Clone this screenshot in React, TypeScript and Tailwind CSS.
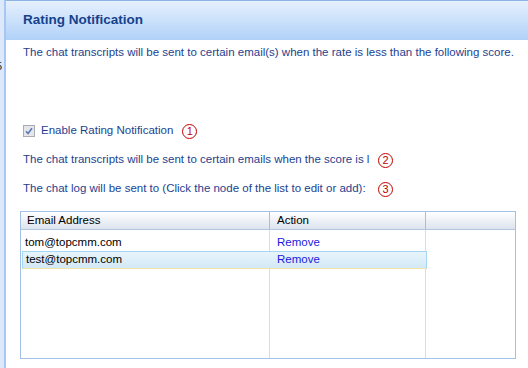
import React from "react";

function Num({ n }: { n: string }) {
  return (
    <span className="inline-flex shrink-0 items-center justify-center w-[15px] h-[15px] rounded-full border border-[#c00000] text-[#c00000] text-[11px] leading-none font-['Liberation_Sans',sans-serif]">
      {n}
    </span>
  );
}

export default function App() {
  const font = "font-['Liberation_Sans',Arial,sans-serif]";
  return (
    <div className={`w-[528px] h-[368px] flex bg-white overflow-hidden ${font}`}>
      <div className="w-[4px] shrink-0 bg-[#dde9fb] relative overflow-hidden">
        <span className="absolute left-[-4px] top-[58px] text-[11px] text-[#222]">5</span>
      </div>
      <div className="w-[2px] shrink-0 bg-[#a6c6f3]" />
      <div className="flex-1 flex flex-col">
        <div className="h-[40px] shrink-0 border-t border-[#8db2e3] bg-gradient-to-b from-[#e6f0fd] to-[#b0d1f8] pl-[17px] flex items-center">
          <span className="text-[13.5px] font-bold text-[#15428b]">Rating Notification</span>
        </div>
        <div className="h-[26px] shrink-0 pl-[17px] flex items-center text-[11.5px] text-[#1d3f8f] whitespace-nowrap">
          The chat transcripts will be sent to certain email(s) when the rate is less than the following score.
        </div>
        <div className="h-[55px] shrink-0" />
        <div className="h-[20px] shrink-0 pl-[17px] flex items-center text-[11.5px] text-[#1d3f8f]">
          <svg width="12" height="12" viewBox="0 0 12 12" className="mr-[6px] shrink-0">
            <rect x="0.5" y="0.5" width="11" height="11" fill="#e4e6ea" stroke="#a7acb6" />
            <path d="M3 6.2 L5 8.5 L9 3.2" fill="none" stroke="#5b7ab3" strokeWidth="1.6" />
          </svg>
          <span>Enable Rating Notification</span>
          <span className="ml-[9px] flex">
            <Num n="1" />
          </span>
        </div>
        <div className="h-[9px] shrink-0" />
        <div className="h-[20px] shrink-0 pl-[17px] flex items-center text-[11.5px] text-[#1d3f8f]">
          <span className="w-[355px] shrink-0 whitespace-nowrap">The chat transcripts will be sent to certain emails when the score is l</span>
          <Num n="2" />
        </div>
        <div className="h-[9px] shrink-0" />
        <div className="h-[20px] shrink-0 pl-[17px] flex items-center text-[11.5px] text-[#1d3f8f]">
          <span className="w-[355px] shrink-0 whitespace-nowrap">The chat log will be sent to (Click the node of the list to edit or add):</span>
          <Num n="3" />
        </div>
        <div className="h-[12px] shrink-0" />
        <div className="ml-[14px] w-[496px] h-[148px] shrink-0 border border-[#a3c0e6] flex flex-col text-[11.5px] text-black overflow-hidden">
          <div className="h-[18px] shrink-0 flex bg-gradient-to-b from-[#ffffff] to-[#dde3ee] border-b border-[#b3c6de]">
            <div className="w-[249px] border-r border-[#a9bfd8] pl-[6px] flex items-center">Email Address</div>
            <div className="w-[156px] border-r border-[#a9bfd8] pl-[7px] flex items-center">Action</div>
            <div className="flex-1" />
          </div>
          <div className="flex-1 min-h-0 relative flex">
            <div className="w-[249px] border-r border-[#dcdcdc]" />
            <div className="w-[156px] border-r border-[#dcdcdc]" />
            <div className="absolute left-0 top-0 right-0 flex flex-col">
              <div className="h-[21px] pt-[4px] flex items-center">
                <div className="w-[249px] pl-[4px]">tom@topcmm.com</div>
                <div className="pl-[7px] text-[#1a1ae0]">Remove</div>
              </div>
              <div className="ml-[1px] w-[405px] h-[18px] flex items-center border border-[#a6d7f2] border-b-[#f0e3a8] bg-gradient-to-b from-[#e8f4fb] to-[#d3e9f6]">
                <div className="w-[247px] pl-[3px]">test@topcmm.com</div>
                <div className="pl-[7px] text-[#1a1ae0]">Remove</div>
              </div>
            </div>
          </div>
        </div>
      </div>
    </div>
  );
}
